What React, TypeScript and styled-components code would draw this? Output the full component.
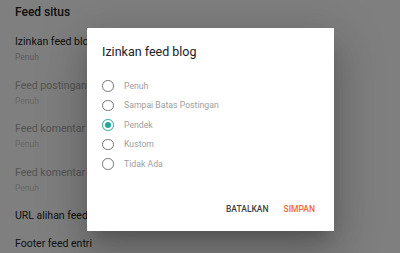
import React from 'react'
import styled, { createGlobalStyle } from 'styled-components'

const GlobalStyle = createGlobalStyle`
  html, body {
    margin: 0;
    padding: 0;
    height: 100%;
    overflow: hidden;
    background: #fff;
    font-family: Roboto, 'Liberation Sans', sans-serif;
  }
`

type Item = { title: string; sub?: string; disabled?: boolean }

const items: Item[] = [
  { title: 'Izinkan feed blog', sub: 'Penuh' },
  { title: 'Feed postingan blog', sub: 'Penuh', disabled: true },
  { title: 'Feed komentar blog', sub: 'Penuh', disabled: true },
  { title: 'Feed komentar tiap postingan', sub: 'Penuh', disabled: true },
  { title: 'URL alihan feed postingan' },
  { title: 'Footer feed entri' },
]

const options = ['Penuh', 'Sampai Batas Postingan', 'Pendek', 'Kustom', 'Tidak Ada']

const App = () => {
  const selected = 'Pendek'
  return (
    <>
      <GlobalStyle />
      <Page>
        <SectionTitle>Feed situs</SectionTitle>
        {items.map((it) => (
          <SettingRow key={it.title} $hasSub={!!it.sub}>
            <SettingTitle $disabled={it.disabled}>{it.title}</SettingTitle>
            {it.sub && <SettingSub $disabled={it.disabled}>{it.sub}</SettingSub>}
          </SettingRow>
        ))}
        <Overlay>
          <Dialog>
            <DialogTitle>Izinkan feed blog</DialogTitle>
            <OptionList>
              {options.map((o) => (
                <Option key={o}>
                  <Radio $checked={o === selected} />
                  <OptionLabel>{o}</OptionLabel>
                </Option>
              ))}
            </OptionList>
            <Actions>
              <ActionButton>BATALKAN</ActionButton>
              <ActionButton $primary>SIMPAN</ActionButton>
            </Actions>
          </Dialog>
        </Overlay>
      </Page>
    </>
  )
}

const Page = styled.main`
  position: relative;
  width: 400px;
  height: 253px;
  overflow: hidden;
  padding: 4px 15px 0;
  box-sizing: border-box;
`

const SectionTitle = styled.h2`
  margin: 0 0 15px;
  font-size: 12px;
  font-weight: 500;
  line-height: 16px;
  color: #212121;
`

const SettingRow = styled.div<{ $hasSub: boolean }>`
  display: flex;
  flex-direction: column;
  gap: 4px;
  height: ${(p) => (p.$hasSub ? '43.5px' : '28px')};
`

const SettingTitle = styled.div<{ $disabled?: boolean }>`
  font-size: 10.5px;
  line-height: 13px;
  color: ${(p) => (p.$disabled ? '#a8a8a8' : '#222')};
  white-space: nowrap;
`

const SettingSub = styled.div<{ $disabled?: boolean }>`
  font-size: 8.5px;
  line-height: 11px;
  color: ${(p) => (p.$disabled ? '#d0d0d0' : '#b8b8b8')};
`

const Overlay = styled.div`
  position: absolute;
  inset: 0;
  background: rgba(0, 0, 0, 0.5);
  display: flex;
  align-items: flex-start;
  padding: 28px 0 0 87px;
`

const Dialog = styled.section`
  width: 247px;
  height: 203px;
  background: #fff;
  box-sizing: border-box;
  padding: 16px 0 0 15px;
  display: flex;
  flex-direction: column;
  box-shadow: 0 11px 15px -7px rgba(0, 0, 0, 0.2), 0 24px 38px 3px rgba(0, 0, 0, 0.14),
    0 9px 46px 8px rgba(0, 0, 0, 0.12);
`

const DialogTitle = styled.h1`
  margin: 0;
  font-size: 12.5px;
  font-weight: 400;
  line-height: 16px;
  color: #212121;
`

const OptionList = styled.div`
  margin-top: 16px;
  display: flex;
  flex-direction: column;
`

const Option = styled.label`
  display: flex;
  align-items: center;
  height: 19.5px;
  gap: 10.5px;
`

const Radio = styled.span<{ $checked: boolean }>`
  position: relative;
  width: 11.5px;
  height: 11.5px;
  box-sizing: border-box;
  border-radius: 50%;
  border: 1.5px solid ${(p) => (p.$checked ? '#26a69a' : '#757575')};
  flex: none;

  &::after {
    content: '';
    display: ${(p) => (p.$checked ? 'block' : 'none')};
    position: absolute;
    inset: 1.75px;
    border-radius: 50%;
    background: #26a69a;
  }
`

const OptionLabel = styled.span`
  font-size: 8.7px;
  color: #9e9e9e;
  white-space: nowrap;
`

const Actions = styled.div`
  margin-top: auto;
  margin-bottom: 16px;
  padding-right: 19px;
  display: flex;
  justify-content: flex-end;
  gap: 15px;
`

const ActionButton = styled.button<{ $primary?: boolean }>`
  border: none;
  background: none;
  padding: 0;
  font-family: Roboto, 'Liberation Sans', sans-serif;
  font-size: 8.5px;
  font-weight: 500;
  line-height: 12px;
  color: ${(p) => (p.$primary ? '#f06a35' : '#424242')};
`

export default App
